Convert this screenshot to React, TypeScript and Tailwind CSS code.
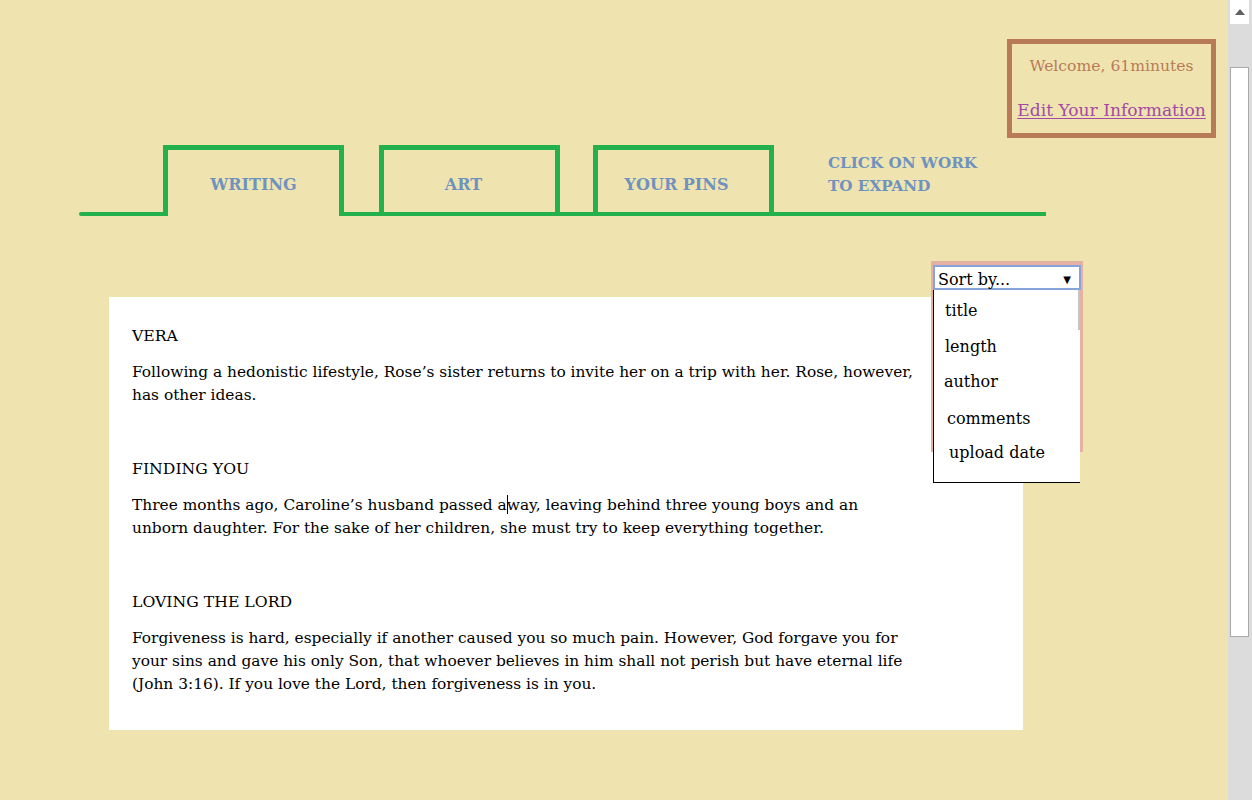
import React from "react";

const serif = "font-['DejaVu_Serif','Liberation_Serif',serif]";

function Entry({ title, lines, first }: { title: string; lines: React.ReactNode[]; first?: boolean }) {
  return (
    <div className={first ? "" : "mt-[50.5px]"}>
      <div className="text-[15.7px] leading-[23px] text-black">{title}</div>
      <div className="mt-[13.5px] text-[15.4px] leading-[23px] text-black">
        {lines.map((l, i) => (
          <div key={i} className="whitespace-nowrap">
            {l}
          </div>
        ))}
      </div>
    </div>
  );
}

export default function App() {
  return (
    <div className={`flex h-[800px] w-[1252px] overflow-hidden bg-[#efe4b0] ${serif}`}>
      <main className="relative h-full w-[1228px]">
        {/* welcome box */}
        <div className="flex justify-end pr-[12px] pt-[39px]">
          <div className="flex h-[99px] w-[209px] flex-col items-center border-[5px] border-[#b97a57] pt-[12px]">
            <div className="text-[15.6px] leading-[20px] text-[#b97a57]">Welcome, 61minutes</div>
            <a className="mt-[23px] text-[17.1px] leading-[22px] text-[#a349a4] underline underline-offset-2">
              Edit Your Information
            </a>
          </div>
        </div>

        {/* tabs */}
        <nav className="ml-[79px] mt-[7px] flex h-[71px] w-[967px] items-end text-[16px] font-bold text-[#7092be]">
          <div className="w-[84px] rounded-l-full border-b-4 border-[#22b14c]" />
          <div className="h-[71px] w-[181px] border-[5px] border-b-0 border-[#22b14c] pt-[24px] text-center leading-[22px]">
            WRITING
          </div>
          <div className="flex h-[71px] flex-1 items-start border-b-4 border-[#22b14c]">
            <div className="ml-[35px] h-[67px] w-[181px] border-[5px] border-b-0 border-[#22b14c] pr-[12px] pt-[24px] text-center leading-[22px]">
              ART
            </div>
            <div className="ml-[33px] h-[67px] w-[181px] border-[5px] border-b-0 border-[#22b14c] pr-[14px] pt-[24px] text-center leading-[22px]">
              YOUR PINS
            </div>
            <div className="ml-[54px] mt-[7px] text-[15.2px] leading-[23px]">
              CLICK ON WORK
              <br />
              TO EXPAND
            </div>
          </div>
        </nav>

        {/* content panel */}
        <section className="ml-[109px] mt-[81px] h-[433px] w-[914px] bg-white pl-[23px] pt-[27px]">
          <Entry
            first
            title="VERA"
            lines={[
              "Following a hedonistic lifestyle, Rose’s sister returns to invite her on a trip with her. Rose, however,",
              "has other ideas.",
            ]}
          />
          <Entry
            title="FINDING YOU"
            lines={[
              <>
                Three months ago, Caroline’s husband passed a
                <span className="relative">
                  <span className="absolute left-0 top-[-1px] h-[19px] w-px bg-black" />
                </span>
                way, leaving behind three young boys and an
              </>,
              "unborn daughter. For the sake of her children, she must try to keep everything together.",
            ]}
          />
          <Entry
            title="LOVING THE LORD"
            lines={[
              "Forgiveness is hard, especially if another caused you so much pain. However, God forgave you for",
              "your sins and gave his only Son, that whoever believes in him shall not perish but have eternal life",
              "(John 3:16). If you love the Lord, then forgiveness is in you.",
            ]}
          />
        </section>

        {/* sort dropdown overlay */}
        <div className="absolute left-[931px] top-[261px] h-[191px] w-[152px] bg-[#e6b0a2]" />
        <div className="absolute left-[933px] top-[265px] flex h-[25px] w-[148px] items-center justify-between border-2 border-[#86a3db] bg-white pl-[3px] pr-[8px] pt-[4px] text-[16px] leading-[20px] text-black">
          <span>Sort by...</span>
          <span className="text-[10px]">▼</span>
        </div>
        <div className="absolute left-[933px] top-[290px] h-[193px] w-[147px] border-b border-l border-black bg-white text-[16px] leading-[20px] text-black">
          <div className="absolute right-0 top-0 h-[40px] w-[2px] bg-[#c4c4c4]" />
          <div className="mt-[11px] pl-[11px]">title</div>
          <div className="mt-[16px] pl-[11px]">length</div>
          <div className="mt-[15px] pl-[10px]">author</div>
          <div className="mt-[17px] pl-[13px]">comments</div>
          <div className="mt-[14px] pl-[15px]">upload date</div>
        </div>
      </main>

      {/* scrollbar */}
      <div className="relative h-full w-[24px] bg-[#dcdcdc]">
        <div className="ml-[2px] flex h-[24px] w-[19px] items-center justify-center bg-white">
          <svg width="10" height="6" viewBox="0 0 10 6">
            <polygon points="5,0 10,6 0,6" fill="#606060" />
          </svg>
        </div>
        <div className="ml-[2px] mt-[43px] h-[570px] w-[19px] border border-[#a8a8a8] bg-white" />
      </div>
    </div>
  );
}
